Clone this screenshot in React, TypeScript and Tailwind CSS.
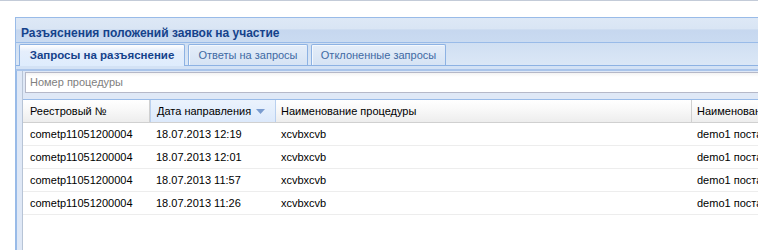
import React from 'react';

const rows = [
  { id: 'cometp11051200004', date: '18.07.2013 12:19', name: 'xcvbxcvb', org: 'demo1 поставщик' },
  { id: 'cometp11051200004', date: '18.07.2013 12:01', name: 'xcvbxcvb', org: 'demo1 поставщик' },
  { id: 'cometp11051200004', date: '18.07.2013 11:57', name: 'xcvbxcvb', org: 'demo1 поставщик' },
  { id: 'cometp11051200004', date: '18.07.2013 11:26', name: 'xcvbxcvb', org: 'demo1 поставщик' },
];

const cols = 'grid grid-cols-[127px_126px_416px_200px]';

const App = () => {
  return (
    <div className="w-[758px] h-[250px] overflow-hidden bg-white border-t border-[#c3cbd8] font-['Liberation_Sans',Arial,sans-serif] text-[11px]">
      <div className="pt-[16px] pl-[15px]">
        <div className="w-[800px] h-[233px] flex flex-col border-l border-t border-[#99bbe8]">
          {/* Panel header */}
          <div className="h-[25px] border-b border-[#99bbe8] bg-[linear-gradient(#dde8f6_0%,#d9e5f4_45%,#c6d7ef_50%,#cadbf1_100%)] pl-[5px] pt-[8px]">
            <span className="font-bold text-[12px] text-[#15428b] leading-[14px] block">Разъяснения положений заявок на участие</span>
          </div>

          {/* Tab strip */}
          <div className="bg-[linear-gradient(#d0dff2,#dbe7f6)] pl-[3px] pt-[1px] flex items-end gap-[3px]">
            <div className="h-[22px] w-[166px] -mb-px rounded-t-[2px] border border-b-0 border-[#8db2e3] bg-[linear-gradient(#ffffff,#e5eefb_30%,#deecfd)] flex items-center justify-center font-bold text-[11.5px] text-[#15428b] relative z-10">
              Запросы на разъяснение
            </div>
            <div className="h-[21px] w-[120px] rounded-t-[2px] border border-b-0 border-[#8db2e3] shadow-[inset_1px_1px_0_#f3f8fe] bg-[linear-gradient(#e4edf9,#d6e3f4)] flex items-center justify-center text-[#416aa3]">
              Ответы на запросы
            </div>
            <div className="h-[21px] w-[135px] rounded-t-[2px] border border-b-0 border-[#8db2e3] shadow-[inset_1px_1px_0_#f3f8fe] bg-[linear-gradient(#e4edf9,#d6e3f4)] flex items-center justify-center text-[#416aa3]">
              Отклоненные запросы
            </div>
          </div>
          <div className="h-[6px] border-t border-[#8db2e3] bg-[#d3e2f5] border-b-2 border-b-[#a9c4ea]" />

          {/* Body */}
          <div className="flex-1 flex border-l border-[#99bbe8] bg-[#dfe8f6] pl-[5px]">
            <div className="flex-1 flex flex-col border-l border-[#b7c4d6] bg-white">
              <div className="bg-[#dfe8f6] pl-[2px] pt-[1px] pb-[6px]">
                <div className="h-[21px] border border-[#b5b8c8] bg-[linear-gradient(#f3f3f3,#ffffff_4px)] pl-[4px] flex items-center text-[#808080]">
                  Номер процедуры
                </div>
              </div>

              {/* Grid */}
              <div className="border-t border-[#99bbe8] flex-1">
                <div className={`${cols} h-[23px] border-b border-[#d0d0d0] bg-[linear-gradient(#ffffff,#f9f9f9_40%,#ededed)] text-black`}>
                  <div className="flex items-center pl-[7px] border-r border-[#d0d0d0]">Реестровый №</div>
                  <div className="flex items-center pl-[6px] border-l border-r border-[#b9d0ef] bg-[linear-gradient(#ebf3fd,#dce9fb)]">
                    Дата направления
                    <svg width="9" height="5" viewBox="0 0 9 5" className="ml-[5px]">
                      <path d="M0 0h9L4.5 5z" fill="#7a9ccf" />
                    </svg>
                  </div>
                  <div className="flex items-center pl-[5px] border-r border-[#d0d0d0]">Наименование процедуры</div>
                  <div className="flex items-center pl-[5px]">Наименование поставщика</div>
                </div>
                {rows.map((r, i) => (
                  <div key={i} className={`${cols} h-[23px] border-b border-[#ededed] text-black`}>
                    <div className="flex items-center pl-[7px]">{r.id}</div>
                    <div className="flex items-center pl-[6px]">{r.date}</div>
                    <div className="flex items-center pl-[5px]">{r.name}</div>
                    <div className="flex items-center pl-[5px]">{r.org}</div>
                  </div>
                ))}
              </div>
            </div>
          </div>
        </div>
      </div>
    </div>
  );
};

export default App;
